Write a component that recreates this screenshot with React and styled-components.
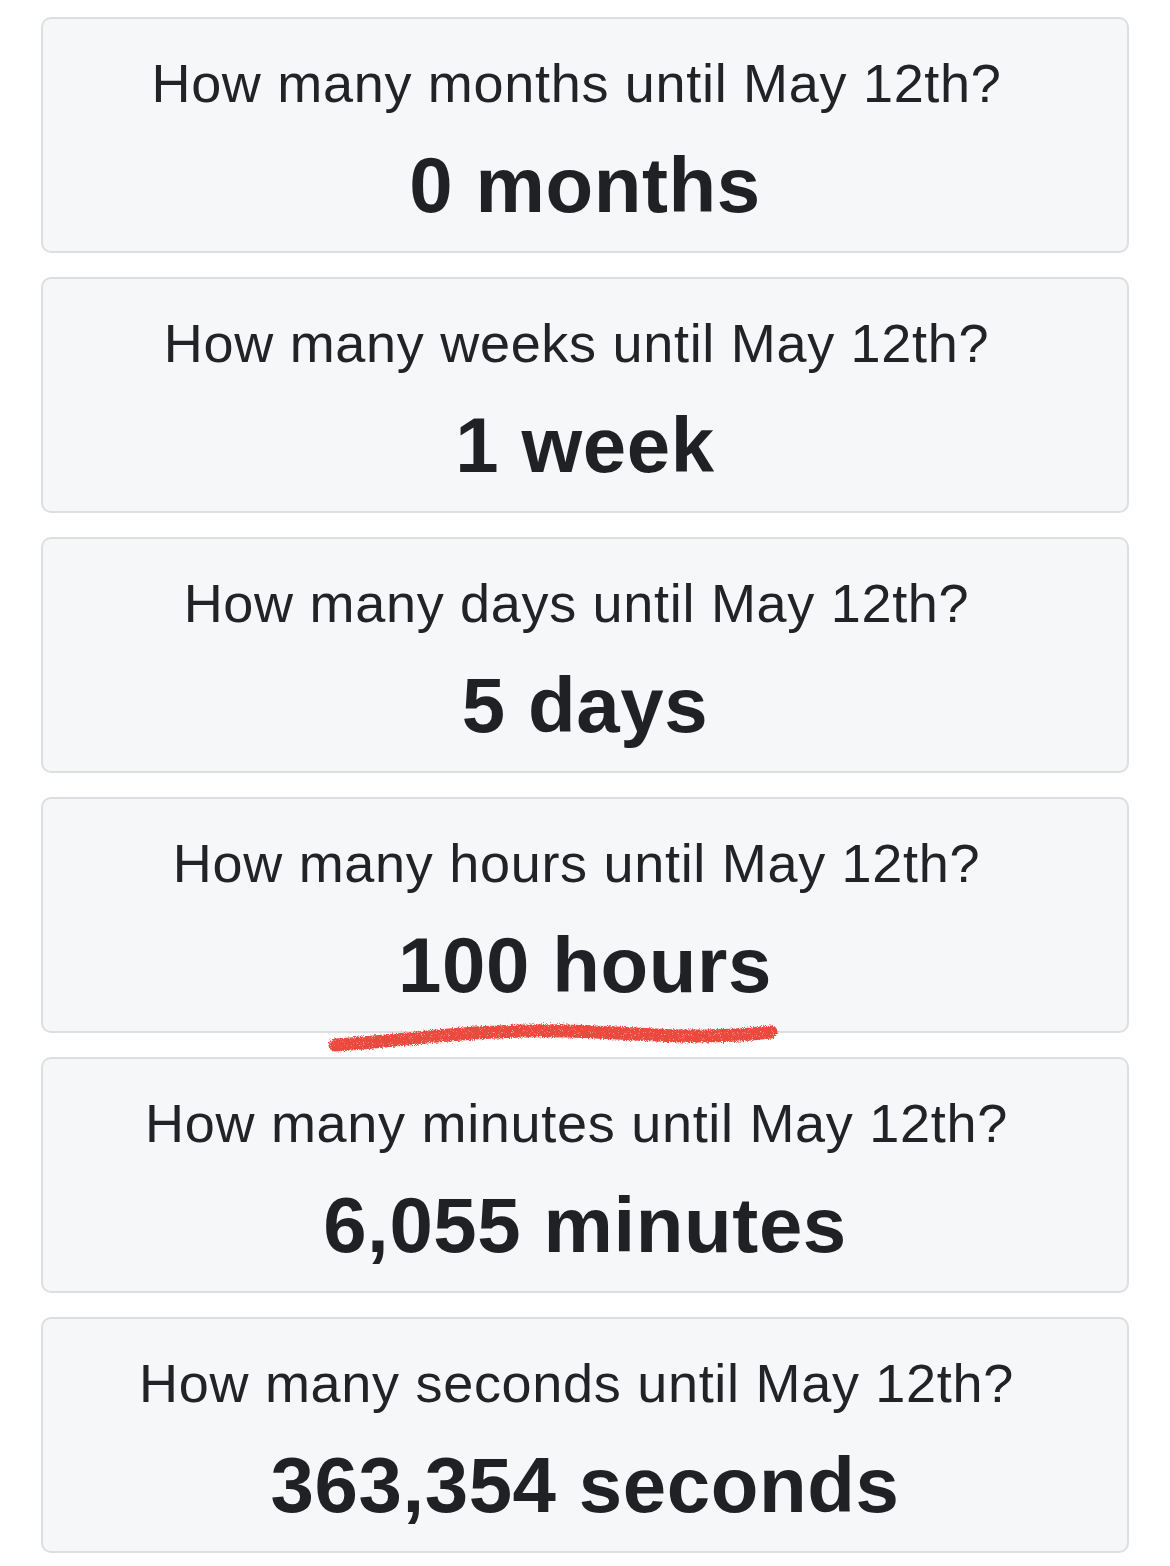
import React from "react";
import styled, { createGlobalStyle } from "styled-components";

const Global = createGlobalStyle`
  html, body {
    margin: 0;
    padding: 0;
    background: #ffffff;
  }
  body {
    font-family: "Liberation Sans", Arial, Helvetica, sans-serif;
    color: #212326;
  }
`;

const Page = styled.main`
  display: flex;
  flex-direction: column;
  gap: 24px;
  padding: 17px 41px 14px;
`;

const Card = styled.section`
  position: relative;
  box-sizing: border-box;
  height: 236px;
  display: flex;
  flex-direction: column;
  align-items: center;
  padding-top: 33px;
  background: #f6f7f9;
  border: 2px solid #dcdee1;
  border-radius: 10px;
`;

const Question = styled.h2`
  margin: 0 17px 0 0;
  font-size: 54px;
  line-height: 62px;
  font-weight: 400;
  letter-spacing: 0.7px;
  color: #212326;
  white-space: nowrap;
`;

const Answer = styled.p`
  margin: 26px 0 0;
  font-size: 78px;
  line-height: 90px;
  font-weight: 700;
  letter-spacing: 0.6px;
  color: #1f2124;
  white-space: nowrap;
`;

const Scribble = styled.svg`
  position: absolute;
  left: 284px;
  bottom: -24px;
  width: 452px;
  height: 36px;
  overflow: visible;
  pointer-events: none;
`;

/* Hand-drawn marker stroke under a highlighted answer */
function MarkerStroke() {
  return (
    <Scribble viewBox="0 0 452 36">
      <defs>
        <filter id="crayon" x="-5%" y="-60%" width="110%" height="220%">
          <feTurbulence type="fractalNoise" baseFrequency="1.1" numOctaves="3" seed="7" result="noise" />
          <feDisplacementMap in="SourceGraphic" in2="noise" scale="5" result="rough" />
          <feColorMatrix
            in="noise"
            type="matrix"
            values="0 0 0 0 1  0 0 0 0 0.72  0 0 0 0 0.68  3 0 0 0 -1.9"
            result="grain"
          />
          <feComposite in="grain" in2="rough" operator="in" result="speckle" />
          <feMerge>
            <feMergeNode in="rough" />
            <feMergeNode in="speckle" />
          </feMerge>
        </filter>
      </defs>
      <path
        d="M8 26 C 40 24, 70 21, 110 17 S 190 11, 240 12 S 330 18, 380 17 S 430 14, 444 13"
        fill="none"
        stroke="#eb4a3c"
        strokeWidth="13"
        strokeLinecap="round"
        filter="url(#crayon)"
      />
    </Scribble>
  );
}

const items = [
  { unit: "months", answer: "0 months" },
  { unit: "weeks", answer: "1 week" },
  { unit: "days", answer: "5 days" },
  { unit: "hours", answer: "100 hours", marked: true },
  { unit: "minutes", answer: "6,055 minutes" },
  { unit: "seconds", answer: "363,354 seconds" },
];

export default function App() {
  return (
    <>
      <Global />
      <Page>
        {items.map((item) => (
          <Card key={item.unit}>
            <Question>How many {item.unit} until May 12th?</Question>
            <Answer>{item.answer}</Answer>
            {item.marked && <MarkerStroke />}
          </Card>
        ))}
      </Page>
    </>
  );
}
